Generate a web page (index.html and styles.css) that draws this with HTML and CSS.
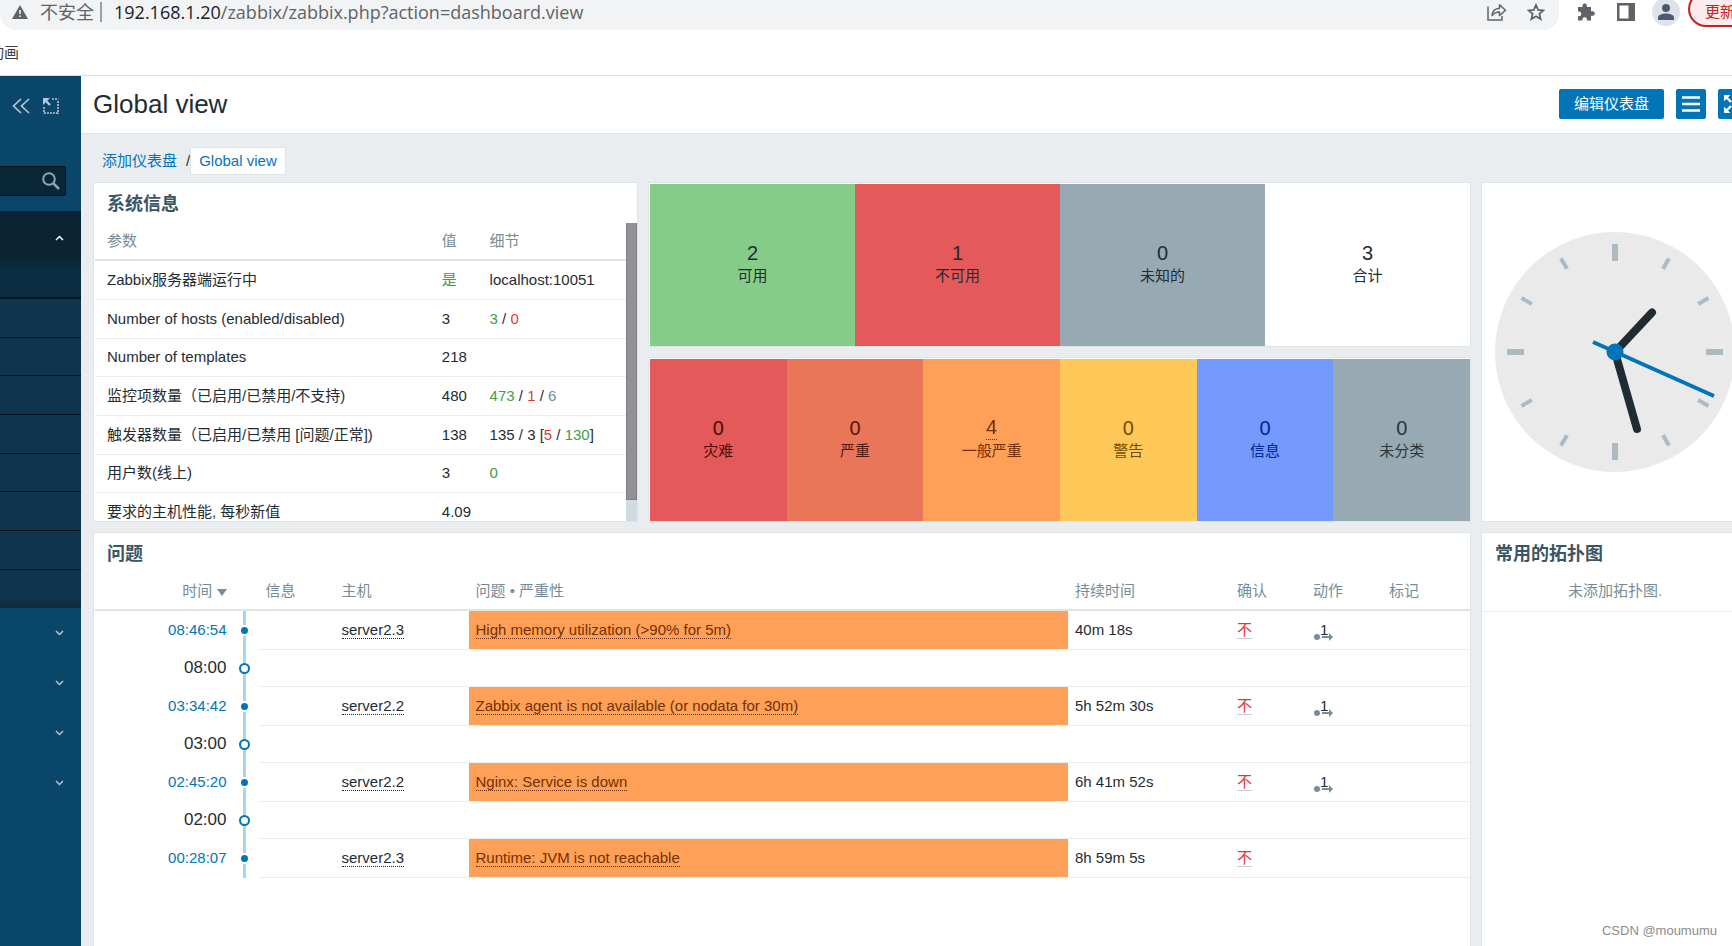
FILE: index.html
```html
<!DOCTYPE html>
<html lang="zh-CN">
<head>
<meta charset="utf-8">
<title>Global view</title>
<link rel="stylesheet" href="styles.css">
</head>
<body>
<div class="browser">
  <div class="toolbar">
    <div class="omnibox">
      <svg class="warn" width="16" height="14" viewBox="0 0 16 14"><path d="M8 0 16 14H0z" fill="#5f6368"/><path d="M8 5v4M8 10.5v1.6" stroke="#f1f3f4" stroke-width="1.6"/></svg>
      <span class="insecure">不安全</span>
      <span class="divider"></span>
      <span class="url"><span class="host">192.168.1.20</span>/zabbix/zabbix.php?action=dashboard.view</span>
      <svg class="share" width="20" height="18" viewBox="0 0 20 18" fill="none" stroke="#5f6368" stroke-width="1.5"><path d="M1 3.5V17h14v-4"/><path d="M5 12.5C5.500 7.500 8.500 5.500 12.500 5.300V1.700L18.500 7.200 12.500 12.500V9C9 9 7 10 5 12.500z" stroke-linejoin="round"/></svg>
      <svg class="star" width="18" height="18" viewBox="0 0 18 18" fill="none" stroke="#5f6368" stroke-width="1.800"><path d="M9 2l2.100 4.900 5.300.5-4 3.500 1.200 5.200L9 13.300l-4.600 2.800 1.200-5.200-4-3.500 5.300-.5z"/></svg>
    </div>
    <svg class="tool" width="18" height="18" viewBox="0 0 18 18"><path d="M1 4h4.500V2.800a2.200 2.200 0 0 1 4.400 0V4H14v4.300h1.600a2.200 2.200 0 0 1 0 4.400H14V17.500H10v-1a2.300 2.300 0 0 0-4.600 0v1H1v-4.300h1a2.300 2.300 0 0 0 0-4.600H1z" fill="#5f6368"/></svg>
    <svg class="tool" width="18" height="18" viewBox="0 0 18 18"><path d="M0 0h18v18H0zM2.500 2.500v13h9v-13z" fill="#5f6368" fill-rule="evenodd"/></svg>
    <svg class="avatar" width="28" height="28" viewBox="0 0 28 28"><circle cx="14" cy="14" r="14" fill="#dfe2e8"/><circle cx="14" cy="10" r="4" fill="#4d5a6e"/><path d="M6 22v-2.500c0-3 5-4 8-4s8 1 8 4V22z" fill="#4d5a6e"/></svg>
    <button class="update" type="button">更新</button>
  </div>
  <div class="bookmarks"><span class="bookmark">动画</span></div>
</div>
<div class="app">
  <aside class="sidebar">
    <div class="side-tools">
      <svg width="18" height="16" viewBox="0 0 18 16" fill="none" stroke="#b5c7d2" stroke-width="1.700"><path d="M9 1 1.500 8 9 15M17 1 9.500 8 17 15"/></svg>
      <svg width="16" height="16" viewBox="0 0 16 16" fill="none" stroke="#b5c7d2"><path d="M9 1h6.500M15 3v13M1 9v6.500M1 15h15" stroke-width="1.600" stroke-dasharray="2 1"/><path d="M0 0h7L0 7z" fill="#b5c7d2" stroke="none"/><path d="M2 2l5 5" stroke-width="2.400"/></svg>
    </div>
    <div class="search">
      <input type="search" aria-label="搜索">
      <svg width="18" height="18" viewBox="0 0 18 18" fill="none" stroke="#8ba6b8"><circle cx="7" cy="7" r="5.800" stroke-width="2"/><path d="M11 11 17 17" stroke-width="2.500"/></svg>
    </div>
    <nav class="menu">
      <div class="group open">
        <svg class="chev" width="9" height="6" viewBox="0 0 9 6"><path d="M1 5l3.500-3.500L8 5"/></svg>
      </div>
      <ul class="submenu"><li></li><li></li><li></li><li></li><li></li><li></li><li></li><li></li><li></li></ul>
      <div class="group"><svg class="chev" width="9" height="6" viewBox="0 0 9 6"><path d="M1 1l3.500 3.500L8 1"/></svg></div>
      <div class="group"><svg class="chev" width="9" height="6" viewBox="0 0 9 6"><path d="M1 1l3.500 3.500L8 1"/></svg></div>
      <div class="group"><svg class="chev" width="9" height="6" viewBox="0 0 9 6"><path d="M1 1l3.500 3.500L8 1"/></svg></div>
      <div class="group"><svg class="chev" width="9" height="6" viewBox="0 0 9 6"><path d="M1 1l3.500 3.500L8 1"/></svg></div>
    </nav>
  </aside>
  <main class="main">
    <header class="page-head">
      <h1>Global view</h1>
      <button class="btn" type="button">编辑仪表盘</button>
      <button class="btn icon" type="button" aria-label="菜单"><svg width="18" height="16" viewBox="0 0 18 16"><path d="M0 1.500h18M0 8h18M0 14.500h18" stroke="#fff" stroke-width="2.400"/></svg></button>
      <button class="btn icon" type="button" aria-label="全屏"><svg width="18" height="18" viewBox="0 0 18 18" fill="#fff" stroke="#fff"><path d="M.5.5h5l-5 5zM17.500.5v5l-5-5zM.5 17.500v-5l5 5zM17.500 17.500h-5l5-5z"/><path d="M2 2l5 5M16 2l-5 5M2 16l5-5M16 16l-5-5" stroke-width="2.400"/></svg></button>
    </header>
    <nav class="crumbs"><a href="#">添加仪表盘</a><span class="slash">/</span><a class="current" href="#">Global view</a></nav>
    <div class="dashboard">
      <section class="widget sysinfo">
        <h2>系统信息</h2>
        <div class="scroller">
          <div class="viewport">
            <table class="info">
              <thead><tr><th class="c-param">参数</th><th class="c-value">值</th><th>细节</th></tr></thead>
              <tbody>
                <tr><td>Zabbix服务器端运行中</td><td class="green">是</td><td>localhost:10051</td></tr>
                <tr><td>Number of hosts (enabled/disabled)</td><td>3</td><td><span class="green">3</span> / <span class="red">0</span></td></tr>
                <tr><td>Number of templates</td><td>218</td><td></td></tr>
                <tr><td>监控项数量（已启用/已禁用/不支持)</td><td>480</td><td><span class="green">473</span> / <span class="red">1</span> / <span class="grey">6</span></td></tr>
                <tr><td>触发器数量（已启用/已禁用 [问题/正常])</td><td>138</td><td>135 / 3 [<span class="red">5</span> / <span class="green">130</span>]</td></tr>
                <tr><td>用户数(线上)</td><td>3</td><td><span class="green">0</span></td></tr>
                <tr><td>要求的主机性能, 每秒新值</td><td>4.09</td><td></td></tr>
              </tbody>
            </table>
          </div>
          <div class="track"><div class="thumb"></div></div>
        </div>
      </section>
      <section class="widget tiles hosts">
        <div class="tile available"><span class="num">2</span><span>可用</span></div>
        <div class="tile unavailable"><span class="num">1</span><span>不可用</span></div>
        <div class="tile unknown"><span class="num">0</span><span>未知的</span></div>
        <div class="tile total"><span class="num">3</span><span>合计</span></div>
      </section>
      <section class="widget tiles severity">
        <div class="tile disaster"><span class="num">0</span><span>灾难</span></div>
        <div class="tile high"><span class="num">0</span><span>严重</span></div>
        <div class="tile average"><a class="num dotted" href="#">4</a><span>一般严重</span></div>
        <div class="tile warning"><span class="num">0</span><span>警告</span></div>
        <div class="tile information"><span class="num">0</span><span>信息</span></div>
        <div class="tile unclassified"><span class="num">0</span><span>未分类</span></div>
      </section>
      <section class="widget clock">
        <svg width="240" height="240" viewBox="-120 -120 240 240">
          <circle r="120" fill="#eaeaea"/>
          <g stroke="#acbbc2" stroke-width="6"><path d="M0-108v17M0 108v-17M-108 0h17M108 0h-17"/></g>
          <g stroke="#acbbc2" stroke-width="4">
            <path d="M0-108v12" transform="rotate(30)"/><path d="M0-108v12" transform="rotate(60)"/><path d="M0-108v12" transform="rotate(120)"/><path d="M0-108v12" transform="rotate(150)"/>
            <path d="M0-108v12" transform="rotate(210)"/><path d="M0-108v12" transform="rotate(240)"/><path d="M0-108v12" transform="rotate(300)"/><path d="M0-108v12" transform="rotate(330)"/>
          </g>
          <path d="M37-39.500 0 0 22 77" fill="none" stroke="#1f2c33" stroke-width="8" stroke-linecap="round"/>
          <path d="M-22-10 99 44" stroke="#0275b8" stroke-width="4"/>
          <circle r="8.500" fill="#0275b8"/>
        </svg>
      </section>
      <section class="widget problems">
        <h2>问题</h2>
        <table class="events">
          <thead><tr><th class="p-time">时间 <svg width="10" height="7" viewBox="0 0 10 7"><path d="M0 0h10L5 7z" fill="#768d99"/></svg></th><th class="p-line"></th><th class="p-info">信息</th><th class="p-host">主机</th><th class="p-name">问题 • 严重性</th><th class="p-dur">持续时间</th><th class="p-ack">确认</th><th class="p-act">动作</th><th class="p-tag">标记</th></tr></thead>
          <tbody>
            <tr class="event"><td class="time"><a href="#">08:46:54</a></td><td class="line"><i class="dot"></i></td><td></td><td><a class="dotted" href="#">server2.3</a></td><td class="problem"><a class="dotted" href="#">High memory utilization (&gt;90% for 5m)</a></td><td>40m 18s</td><td><a class="ack" href="#">不</a></td><td><span class="action">1<svg width="20" height="8" viewBox="0 0 20 8"><circle cx="3" cy="4" r="3"/><path d="M8 3h7V0l4 4-4 4V5H8z"/></svg></span></td><td></td></tr>
            <tr class="hour"><td class="time">08:00</td><td class="line"><i class="ring"></i></td><td colspan="7"></td></tr>
            <tr class="event"><td class="time"><a href="#">03:34:42</a></td><td class="line"><i class="dot"></i></td><td></td><td><a class="dotted" href="#">server2.2</a></td><td class="problem"><a class="dotted" href="#">Zabbix agent is not available (or nodata for 30m)</a></td><td>5h 52m 30s</td><td><a class="ack" href="#">不</a></td><td><span class="action">1<svg width="20" height="8" viewBox="0 0 20 8"><circle cx="3" cy="4" r="3"/><path d="M8 3h7V0l4 4-4 4V5H8z"/></svg></span></td><td></td></tr>
            <tr class="hour"><td class="time">03:00</td><td class="line"><i class="ring"></i></td><td colspan="7"></td></tr>
            <tr class="event"><td class="time"><a href="#">02:45:20</a></td><td class="line"><i class="dot"></i></td><td></td><td><a class="dotted" href="#">server2.2</a></td><td class="problem"><a class="dotted" href="#">Nginx: Service is down</a></td><td>6h 41m 52s</td><td><a class="ack" href="#">不</a></td><td><span class="action">1<svg width="20" height="8" viewBox="0 0 20 8"><circle cx="3" cy="4" r="3"/><path d="M8 3h7V0l4 4-4 4V5H8z"/></svg></span></td><td></td></tr>
            <tr class="hour"><td class="time">02:00</td><td class="line"><i class="ring"></i></td><td colspan="7"></td></tr>
            <tr class="event"><td class="time"><a href="#">00:28:07</a></td><td class="line"><i class="dot"></i></td><td></td><td><a class="dotted" href="#">server2.3</a></td><td class="problem"><a class="dotted" href="#">Runtime: JVM is not reachable</a></td><td>8h 59m 5s</td><td><a class="ack" href="#">不</a></td><td></td><td></td></tr>
          </tbody>
        </table>
      </section>
      <section class="widget maps">
        <h2>常用的拓扑图</h2>
        <p class="empty">未添加拓扑图.</p>
      </section>
    </div>
  </main>
</div>
<div class="watermark">CSDN @moumumu</div>
</body>
</html>
```
FILE: styles.css
```css
* { box-sizing: border-box; }

body {
  margin: 0;
  height: 100vh;
  overflow: hidden;
  display: flex;
  flex-direction: column;
  background: #fff;
  color: #1f2c33;
  font: 15px/20px "Liberation Sans", Arial, "Noto Sans CJK SC", sans-serif;
}

svg { display: block; flex: none; }
a { color: #0275b8; text-decoration: none; }
button { font: inherit; cursor: pointer; }

/* Browser chrome */
.browser { flex: none; border-bottom: 1px solid #dadce0; overflow: hidden; }
.toolbar { display: flex; align-items: center; height: 30px; }
.omnibox {
  flex: 1;
  display: flex;
  align-items: center;
  height: 30px;
  padding: 0 14px 6px 12px;
  border-radius: 0 0 16px 16px;
  background: #f1f3f4;
  color: #5f6368;
  font: 18px/24px "Open Sans", "Noto Sans CJK SC", sans-serif;
}
.insecure { margin-left: 12px; }
.divider { width: 2px; height: 20px; margin: 0 12px 0 6px; background: #9aa0a6; }
.url { flex: 1; white-space: nowrap; }
.host { color: #202124; }
.star { margin-left: 20px; }
.tool { margin: 0 0 6px 18px; }
.tool + .tool { margin-left: 22px; }
.avatar { margin: 0 0 6px 17px; }
.update {
  flex: none;
  width: 60px;
  height: 36px;
  margin: -12px -16px 0 8px;
  padding: 6px 0 0 15px;
  border: 2px solid #c5221f;
  border-radius: 18px;
  background: #faecec;
  color: #c5221f;
  text-align: left;
  white-space: nowrap;
}
.bookmarks { height: 45px; padding-top: 13px; }
.bookmark { margin-left: -11px; color: #3c4043; }

/* Sidebar */
.app { flex: 1; display: flex; min-height: 0; }
.sidebar { flex: none; width: 81px; background: #0a466a; }
.side-tools { display: flex; gap: 13px; padding: 22px 12px 0; height: 90px; }
.search {
  display: flex;
  align-items: center;
  width: 66px;
  height: 30px;
  padding-right: 5px;
  border: 1px solid #020d14;
  border-left: 0;
  border-radius: 0 3px 3px 0;
  background: #0a2738;
}
.search input { flex: 1; min-width: 0; height: 28px; padding: 0; border: 0; background: none; color: #fff; }
.menu { padding-top: 15px; }
.group { display: flex; align-items: center; justify-content: flex-end; height: 50px; padding-right: 17px; }
.group.open { height: 49px; padding-top: 4px; background: #0a2433; }
.chev { fill: none; stroke: #b5c7d2; stroke-width: 1.5px; }
.open .chev { stroke: #fff; }
.submenu { margin: 0; padding: 0; list-style: none; background: #0f344d; }
.submenu li { height: 39px; border-bottom: 1px solid #041520; }
.submenu li:nth-child(3n) { height: 38px; }
.submenu li:first-child { background: linear-gradient(#0a2635, #0c2d41 30%); border-bottom-width: 2px; }
.submenu li:last-child { height: 38px; border: 0; background: linear-gradient(#0f344d 70%, #0c2b3e); }

/* Page head */
.main { flex: 1; min-width: 0; display: flex; flex-direction: column; overflow: hidden; background: #e9edf0; }
.page-head {
  flex: none;
  display: flex;
  align-items: center;
  gap: 12px;
  height: 58px;
  padding: 0 1px 1px 12px;
  margin-right: -17px;
  border-bottom: 1px solid #dfe4e7;
  background: #fff;
}
h1 { flex: 1; margin: 0; font-size: 26px; line-height: 30px; font-weight: 400; }
.btn {
  flex: none;
  height: 30px;
  padding: 0 15px;
  border: 0;
  border-radius: 2px;
  background: #0275b8;
  color: #fff;
}
.btn.icon { width: 30px; padding: 0 6px; }
.crumbs { flex: none; display: flex; align-items: center; height: 48px; padding: 6px 21px 0; }
.slash { margin-left: 9px; }
.current { padding: 3px 8px; border: 1px solid #dfe4e7; border-radius: 2px; background: #fff; }

/* Dashboard */
.dashboard {
  flex: 1;
  display: grid;
  grid-template-columns: 545fr 823fr 268fr;
  grid-template-rows: 165px 165px 1fr;
  gap: 10px;
  margin: 0 -17px -2px 12px;
}
.widget { min-width: 0; min-height: 0; border: 1px solid #dfe4e7; background: #fff; overflow: hidden; }
.sysinfo { grid-row: 1 / 3; display: flex; flex-direction: column; }
.severity { grid-area: 2 / 2; }
.clock { grid-area: 1 / 3 / 3 / 4; display: flex; align-items: center; justify-content: center; }
.problems { grid-area: 3 / 1 / 4 / 3; padding-left: 1px; }
.maps { grid-area: 3 / 3; }
h2 { flex: none; margin: 0; padding: 11px 13px 9px; font-size: 18px; line-height: 20px; color: #3c5563; }
.problems h2 { padding-left: 12px; }

.scroller { flex: 1; display: flex; min-height: 0; }
.viewport { flex: 1; padding-left: 1px; overflow: hidden; }
.track { width: 11px; background: #d2dbe1; }
.thumb { height: 93%; border: 1px solid #7f7f81; border-top: 0; background: #929294; }

table { width: 100%; border-collapse: separate; border-spacing: 0; table-layout: fixed; }
th { height: 38px; padding: 0 6px; border-bottom: 2px solid #dfe4e7; color: #768d99; font-weight: 400; text-align: left; }
td { height: 39px; padding: 0 6px 1px; border-bottom: 1px solid #ebeef0; white-space: nowrap; }
.info th, .info td { padding-left: 7px; }
.info tr:nth-child(3n) td { height: 38px; }
.info th:first-child, .info td:first-child { padding-left: 12px; }
.c-param { width: 64%; }
.c-value { width: 9%; }
.green { color: #429e47; }
.red { color: #e33734; }
.grey { color: #768d99; }

/* Counter tiles */
.tiles { display: flex; padding: 1px 0 0 1px; }
.tile { flex: 1 1 0; display: flex; flex-direction: column; align-items: center; justify-content: center; padding-bottom: 3px; line-height: 22px; }
.num { font-size: 20px; line-height: 24px; color: inherit; }
.tile a.num { line-height: 23px; }
.available { background: #86cc89; }
.unavailable { background: #e45959; }
.unknown { background: #97aab3; }
.disaster { background: #e45959; color: #4b0c0c; }
.high { background: #e97659; color: #52190b; }
.average { background: #ffa059; color: #733100; }
.warning { background: #ffc859; color: #734d00; }
.information { background: #7499ff; color: #00268e; }
.unclassified { background: #97aab3; color: #2c3539; }

/* Problem list */
.events th, .events td { padding-left: 7px; }
.dotted { color: inherit; border-bottom: 1px dotted currentColor; }
.p-time { width: 10%; text-align: right; }
.p-time svg { display: inline-block; }
.p-line { width: 26px; }
.p-info, .p-ack, .p-act { width: 76px; }
.p-host { width: 134px; }
.p-dur { width: 162px; }
.p-tag { width: 88px; }
.time { border: 0; text-align: right; }
.events .line { padding: 0 0 1px; border: 0; background: linear-gradient(#a6d6ef, #a6d6ef) 10px 0 / 3px 100% no-repeat; }
.hour td { height: 37px; }
.hour .time { padding-bottom: 2px; font-size: 17px; }
.problem { background: #ffa059; color: #733100; }
.dot, .ring { display: block; border-radius: 50%; }
.dot { width: 11px; height: 11px; margin-left: 6px; border: 2px solid #fff; background: #0275b8; }
.ring { width: 11px; height: 11px; margin-left: 6px; border: 2px solid #0275b8; background: #fff; }
.ack { color: #e33734; border-bottom: 1px solid #c9ced3; }
.action { position: relative; padding-left: 7px; }
.action svg { position: absolute; left: 1px; bottom: -3px; fill: #768d99; }

.empty { margin: 0; padding: 8px 0 10px; border-bottom: 1px solid #ebeef0; color: #768d99; text-align: center; }
.watermark { position: absolute; right: 15px; bottom: 5px; font-size: 13px; color: #8c8c8c; }
```
